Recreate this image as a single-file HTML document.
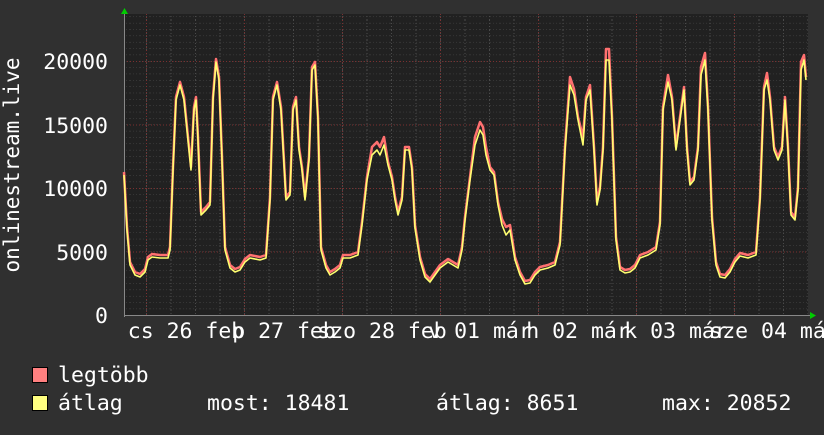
<!DOCTYPE html>
<html><head><meta charset="utf-8"><style>
body{margin:0;background:#303030;width:824px;height:430px;overflow:hidden}
svg text{font-family:"DejaVu Sans Mono","Liberation Mono",monospace;fill:#fff}
</style></head><body>
<svg width="824" height="430" xmlns="http://www.w3.org/2000/svg">
<rect width="824" height="430" fill="#303030"/>
<rect x="124" y="14" width="684" height="301" fill="#212121"/>
<defs>
<pattern id="hm" x="0" y="315" width="10" height="6.35" patternUnits="userSpaceOnUse"><line x1="0" y1="0" x2="10" y2="0" stroke="#4a4a4a" stroke-dasharray="1,2"/></pattern>
<pattern id="vm" x="146" y="0" width="24.5" height="10" patternUnits="userSpaceOnUse"><line x1="0.5" y1="0" x2="0.5" y2="10" stroke="#4a4a4a" stroke-dasharray="1,2"/></pattern>
</defs>
<rect x="124" y="14" width="684" height="301" fill="url(#hm)"/>
<rect x="124" y="14" width="684" height="301" fill="url(#vm)"/>
<g stroke="#7a3030" stroke-dasharray="1,2">
<line x1="124" y1="61.5" x2="808" y2="61.5"/><line x1="124" y1="125" x2="808" y2="125"/><line x1="124" y1="188.5" x2="808" y2="188.5"/><line x1="124" y1="252" x2="808" y2="252"/>
<line x1="146.5" y1="14" x2="146.5" y2="315"/><line x1="244.5" y1="14" x2="244.5" y2="315"/><line x1="342.5" y1="14" x2="342.5" y2="315"/><line x1="440.5" y1="14" x2="440.5" y2="315"/><line x1="538.5" y1="14" x2="538.5" y2="315"/><line x1="636.5" y1="14" x2="636.5" y2="315"/><line x1="734.5" y1="14" x2="734.5" y2="315"/>
</g>
<line x1="124" y1="315.5" x2="810" y2="315.5" stroke="#888"/>
<line x1="124.5" y1="12" x2="124.5" y2="317" stroke="#888"/>
<polygon points="121,14 128,14 124.5,8" fill="#0c0"/>
<polygon points="810,312 810,319 816,315.5" fill="#0c0"/>
<g fill="none" stroke-linejoin="round">
<polyline transform="translate(0,-3)" stroke="#ff7070" stroke-width="2.5" points="124,175 127,230 130,265 135,275 140,277 145,272 148,260 152,257 160,258 168,258 170,250 173,170 176,100 180,85 184,100 188,140 191,170 194,110 196,100 198,140 201,215 206,210 210,205 213,100 216,62 219,80 222,160 225,250 230,268 235,272 240,270 245,262 250,258 260,260 266,258 270,200 273,100 277,85 281,110 286,200 290,195 293,110 296,100 299,150 302,170 305,200 309,160 312,70 315,65 318,120 321,250 326,268 330,275 335,272 340,268 343,258 350,258 358,255 362,225 367,180 372,150 377,145 380,150 384,140 388,165 392,180 395,200 398,215 402,200 405,150 409,150 412,170 415,228 420,260 425,277 430,282 435,275 440,268 448,262 453,265 458,268 462,250 465,220 470,180 475,140 480,125 483,130 486,150 490,170 494,175 498,205 502,222 506,230 510,228 515,260 520,275 525,284 530,283 535,275 540,270 548,268 555,265 560,245 565,150 570,80 574,92 578,120 583,140 586,100 590,88 594,150 597,205 600,190 603,150 606,52 609,52 612,120 616,240 620,270 625,273 630,272 635,268 640,258 648,255 656,250 660,225 663,110 668,78 672,100 676,150 680,120 684,90 687,150 690,185 694,180 698,150 701,70 705,56 708,110 712,220 716,265 720,277 725,278 730,272 735,262 740,256 748,258 756,255 760,200 764,90 767,76 770,100 774,150 778,160 782,150 785,100 788,150 791,215 795,220 798,190 801,65 804,58 806,80"/>
<polyline stroke="#ffff70" stroke-width="1.6" points="124,175 127,230 130,265 135,275 140,277 145,272 148,260 152,257 160,258 168,258 170,250 173,170 176,100 180,85 184,100 188,140 191,170 194,110 196,100 198,140 201,215 206,210 210,205 213,100 216,62 219,80 222,160 225,250 230,268 235,272 240,270 245,262 250,258 260,260 266,258 270,200 273,100 277,85 281,110 286,200 290,195 293,110 296,100 299,150 302,170 305,200 309,160 312,70 315,65 318,120 321,250 326,268 330,275 335,272 340,268 343,258 350,258 358,255 362,225 367,180 372,155 377,150 380,155 384,145 388,165 392,180 395,200 398,215 402,200 405,150 409,150 412,170 415,228 420,260 425,277 430,282 435,275 440,268 448,262 453,265 458,268 462,250 465,220 470,180 475,145 480,130 483,135 486,155 490,170 494,175 498,205 502,225 506,235 510,230 515,260 520,275 525,284 530,283 535,275 540,270 548,268 555,265 560,245 565,150 570,85 574,95 578,120 583,145 586,100 590,90 594,150 597,205 600,190 603,150 606,60 609,60 612,120 616,240 620,270 625,273 630,272 635,268 640,258 648,255 656,250 660,225 663,110 668,82 672,100 676,150 680,120 684,90 687,150 690,185 694,180 698,150 701,75 705,60 708,110 712,220 716,265 720,277 725,278 730,272 735,262 740,256 748,258 756,255 760,200 764,90 767,80 770,100 774,150 778,160 782,150 785,100 788,150 791,215 795,220 798,190 801,70 804,60 806,80"/>
</g>
<g font-size="21.5" text-anchor="end">
<text x="108" y="69">20000</text><text x="108" y="133">15000</text><text x="108" y="196">10000</text><text x="108" y="260">5000</text><text x="108" y="323">0</text>
</g>
<text transform="translate(19,165) rotate(-90)" font-size="21" text-anchor="middle">onlinestream.live</text>
<g font-size="21.5" text-anchor="middle">
<text x="186" y="338">cs 26 feb</text><text x="284" y="338">p 27 feb</text><text x="382" y="338">szo 28 feb</text><text x="480" y="338">v 01 már</text><text x="578" y="338">h 02 már</text><text x="676" y="338">k 03 már</text><text x="774" y="338">sze 04 már</text>
</g>
<rect x="32.5" y="367.5" width="15" height="15" fill="#ff8080" stroke="#000"/>
<rect x="32.5" y="395.5" width="15" height="15" fill="#ffff80" stroke="#000"/>
<g font-size="21.5">
<text x="58" y="382">legtöbb</text><text x="58" y="410">átlag</text>
<text x="207" y="410">most: 18481</text><text x="436" y="410">átlag: 8651</text><text x="662" y="410">max: 20852</text>
</g>
</svg>
</body></html>
